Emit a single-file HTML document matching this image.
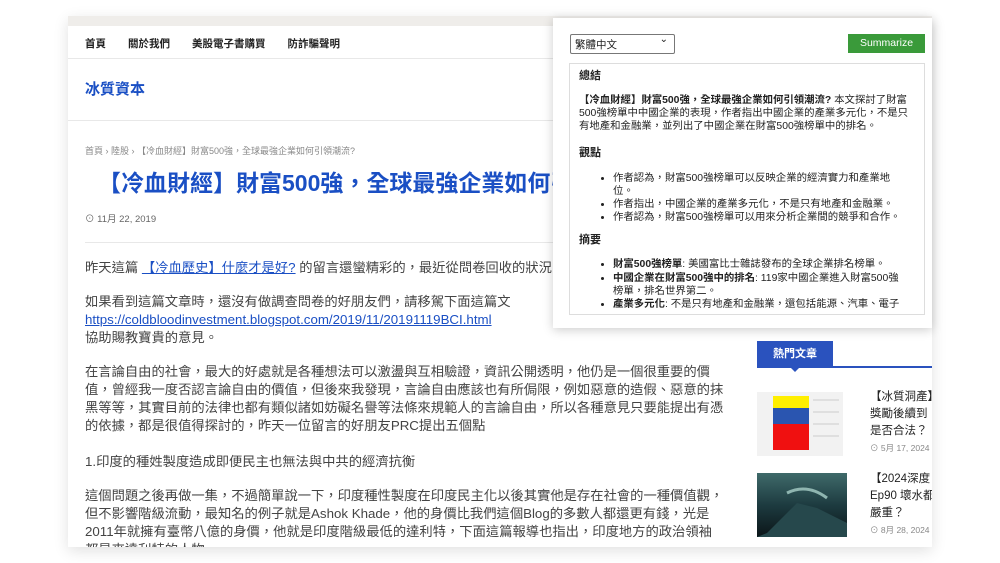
<!DOCTYPE html>
<html><head><meta charset="utf-8"><style>
*{margin:0;padding:0;box-sizing:border-box}
body{width:1000px;height:563px;background:#fff;font-family:"Liberation Sans","Noto Sans CJK TC",sans-serif;position:relative;overflow:hidden;color:#333}
.card{position:absolute;left:68px;top:16px;width:864px;height:531px;background:#fff;box-shadow:0 4px 14px rgba(0,0,0,.12);overflow:hidden}
.topbar{position:absolute;left:0;top:0;width:100%;height:10px;background:#efedea}
.nav{position:absolute;left:17px;top:20px;font-size:10.5px;font-weight:bold;color:#222}
.nav span{margin-right:22px}
.hr{position:absolute;left:0;width:100%;height:1px;background:#e8e8e8}
.logo{position:absolute;left:17px;top:62px;font-size:15px;font-weight:bold;color:#1a4fc4}
.crumb{position:absolute;left:17px;top:128px;font-size:9px;color:#888}
h1{position:absolute;left:30px;top:152px;font-size:23px;line-height:30px;color:#1a4fc4;white-space:nowrap;font-weight:bold}
.date{position:absolute;left:17px;top:195px;font-size:9.5px;color:#666}
.t{position:absolute;left:17px;font-size:13.3px;color:#444;white-space:nowrap;line-height:18px}
a{color:#1a4fc4}
.tab{position:absolute;left:689px;top:325px;width:76px;height:26px;background:#2a52be;color:#fff;font-size:11px;font-weight:bold;text-align:center;line-height:26px}
.tab:after{content:"";position:absolute;left:33px;bottom:-5px;border:5px solid transparent;border-top-color:#2a52be;border-bottom:0}
.tabline{position:absolute;left:689px;top:350px;width:200px;height:2px;background:#2a52be}
.side{position:absolute;left:802px;font-size:11.5px;color:#222;line-height:17px;white-space:nowrap}
.side small{font-size:8.5px;color:#888}
.pop{position:absolute;left:553px;top:18px;width:379px;height:310px;background:#fff;box-shadow:0 2px 10px rgba(0,0,0,.2)}
.sel{position:absolute;left:17px;top:16px;width:105px;height:20px;border:1px solid #777;border-radius:2px;font-size:10.5px;padding:2px 4px;color:#222}
.sel:after{content:"⌄";position:absolute;right:6px;top:-1px;font-size:10px}
.btn{position:absolute;left:295px;top:16px;width:77px;height:19px;background:#3a9a3a;color:#fff;font-size:10.5px;text-align:center;line-height:19px}
.box{position:absolute;left:16px;top:45px;width:356px;height:252px;border:1px solid #ddd;overflow:hidden;padding:5px 9px;font-size:10.4px;line-height:13.2px;color:#222}
.box h4{font-size:11px;line-height:14px}
.box p{margin:11px 0 12.5px}
.box ul{margin:11.5px 8px 8.5px 34px;list-style:disc}
</style></head><body>
<div class="card">
<div class="topbar"></div>
<div class="nav"><span>首頁</span><span>關於我們</span><span>美股電子書購買</span><span>防詐騙聲明</span></div>
<div class="hr" style="top:42px"></div>
<div class="logo">冰質資本</div>
<div class="hr" style="top:104px"></div>
<div class="crumb">首頁 › 陸股 › 【冷血財經】財富500強，全球最強企業如何引領潮流?</div>
<h1>【冷血財經】財富500強，全球最強企業如何引領潮流?</h1>
<div class="date">⊙ 11月 22, 2019</div>
<div class="hr" style="top:226px;left:17px;width:660px"></div>
<div class="t" style="top:243px">昨天這篇 <a href="#">【冷血歷史】什麼才是好?</a> 的留言還蠻精彩的，最近從問卷回收的狀況</div>
<div class="t" style="top:277px">如果看到這篇文章時，還沒有做調查問卷的好朋友們，請移駕下面這篇文<br><a href="#">https://coldbloodinvestment.blogspot.com/2019/11/20191119BCI.html</a><br>協助賜教寶貴的意見。</div>
<div class="t" style="top:347px">在言論自由的社會，最大的好處就是各種想法可以激盪與互相驗證，資訊公開透明，他仍是一個很重要的價<br>值，曾經我一度否認言論自由的價值，但後來我發現，言論自由應該也有所侷限，例如惡意的造假、惡意的抹<br>黑等等，其實目前的法律也都有類似諸如妨礙名譽等法條來規範人的言論自由，所以各種意見只要能提出有憑<br>的依據，都是很值得探討的，昨天一位留言的好朋友PRC提出五個點</div>
<div class="t" style="top:437px">1.印度的種姓製度造成即便民主也無法與中共的經濟抗衡</div>
<div class="t" style="top:471px">這個問題之後再做一集，不過簡單說一下，印度種性製度在印度民主化以後其實他是存在社會的一種價值觀，<br>但不影響階級流動，最知名的例子就是Ashok Khade，他的身價比我們這個Blog的多數人都還更有錢，光是<br>2011年就擁有臺幣八億的身價，他就是印度階級最低的達利特，下面這篇報導也指出，印度地方的政治領袖<br>都是來達利特的人物</div>
<div class="tab">熱門文章</div><div class="tabline"></div>
<svg style="position:absolute;left:689px;top:376px" width="86" height="64"><rect width="86" height="64" fill="#f2f2f2"/><rect x="16" y="4" width="36" height="12" fill="#ffef00"/><rect x="16" y="16" width="36" height="16" fill="#2a55b0"/><rect x="16" y="32" width="36" height="26" fill="#f01010"/><g stroke="#ccc"><line x1="56" y1="8" x2="82" y2="8"/><line x1="56" y1="20" x2="82" y2="20"/><line x1="56" y1="32" x2="82" y2="32"/><line x1="56" y1="44" x2="82" y2="44"/></g></svg>
<svg style="position:absolute;left:689px;top:457px" width="90" height="64"><defs><linearGradient id="g" x1="0" y1="0" x2="0" y2="1"><stop offset="0" stop-color="#3f6a6a"/><stop offset=".5" stop-color="#1d3b40"/><stop offset="1" stop-color="#0b1518"/></linearGradient></defs><rect width="90" height="64" fill="url(#g)"/><path d="M10 60 L40 30 L60 35 L90 50 L90 64 L0 64Z" fill="#26484c"/><path d="M30 20 Q50 10 70 25" stroke="#8fb5b0" fill="none" stroke-width="3"/></svg>
<div class="side" style="top:373px">【冰質洞產】<br>獎勵後續到<br>是否合法？<br><small>⊙ 5月 17, 2024</small></div>
<div class="side" style="top:455px">【2024深度<br>Ep90 壞水都<br>嚴重？<br><small>⊙ 8月 28, 2024</small></div>
</div>
<div class="pop">
<div class="sel">繁體中文</div>
<div class="btn">Summarize</div>
<div class="box">
<h4>總結</h4>
<p><b>【冷血財經】財富500強，全球最強企業如何引領潮流?</b> 本文探討了財富500強榜單中中國企業的表現，作者指出中國企業的產業多元化，不是只有地產和金融業，並列出了中國企業在財富500強榜單中的排名。</p>
<h4>觀點</h4>
<ul><li>作者認為，財富500強榜單可以反映企業的經濟實力和產業地位。</li><li>作者指出，中國企業的產業多元化，不是只有地產和金融業。</li><li>作者認為，財富500強榜單可以用來分析企業間的競爭和合作。</li></ul>
<h4>摘要</h4>
<ul><li><b>財富500強榜單</b>: 美國富比士雜誌發布的全球企業排名榜單。</li><li><b>中國企業在財富500強中的排名</b>: 119家中國企業進入財富500強榜單，排名世界第二。</li><li><b>產業多元化</b>: 不是只有地產和金融業，還包括能源、汽車、電子</li></ul>
</div>
</div>
</body></html>
